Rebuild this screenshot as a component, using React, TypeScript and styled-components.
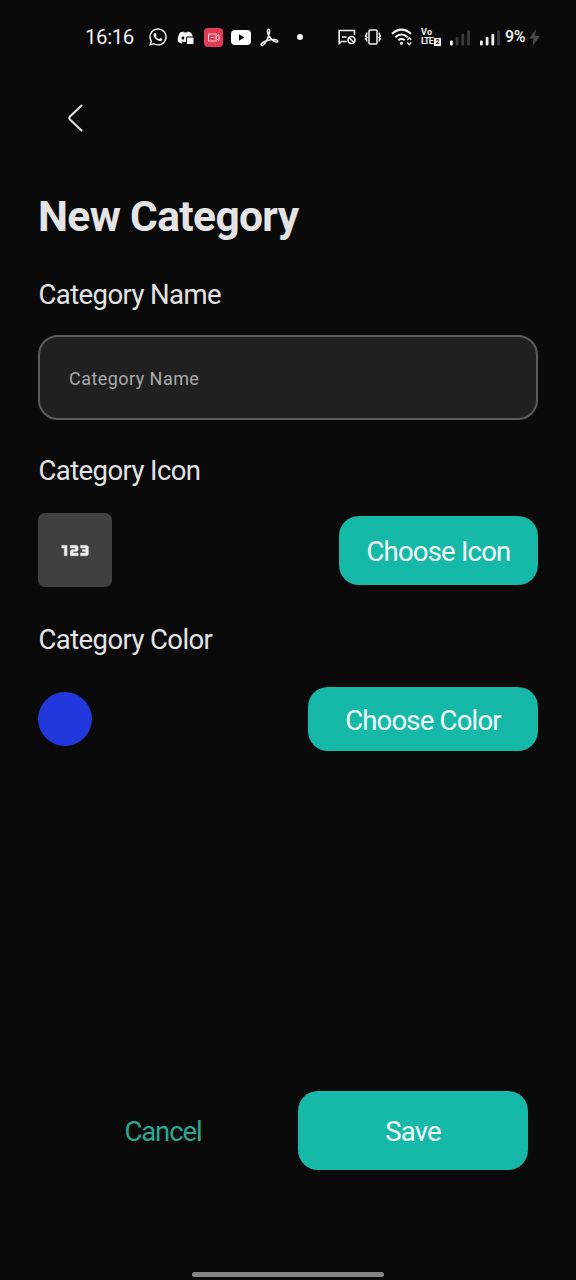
import React from "react";
import styled, { createGlobalStyle } from "styled-components";
import { FaDiscord, FaWhatsapp } from "react-icons/fa";
import { Md123 } from "react-icons/md";

const Global = createGlobalStyle`
  * { box-sizing: border-box; }
  body { margin: 0; background: #0a0a0a; }
  button, input { font: inherit; border: 0; padding: 0; margin: 0; background: none; outline: none; }
`;

const Screen = styled.main`
  width: 576px;
  height: 1280px;
  display: flex;
  flex-direction: column;
  overflow: hidden;
  background: #0a0a0a;
  color: #e4e4e4;
  font-family: Roboto, "Liberation Sans", sans-serif;
`;

const StatusBar = styled.header`
  height: 74px;
  padding-left: 85px;
  display: flex;
  align-items: center;
  color: #f4f4f4;
  flex: none;
`;

const Slot = styled.span<{ $w: number; $gap: number }>`
  width: ${(p) => p.$w}px;
  margin-left: ${(p) => p.$gap}px;
  display: flex;
  flex: none;
  align-items: center;
  svg { display: block; flex: none; overflow: visible; }
`;

const Clock = styled.time`
  width: 49px;
  font-size: 20.5px;
  line-height: 24px;
  letter-spacing: -0.45px;
  white-space: nowrap;
`;

const Battery = styled.span`
  font-size: 16px;
  font-weight: 500;
  line-height: 20px;
  letter-spacing: -0.4px;
  white-space: nowrap;
`;

const Volte = styled.span`
  display: grid;
  grid-template-columns: 13px 7px;
  grid-template-rows: 9px 9px;
  align-items: center;
  font-size: 9px;
  line-height: 9px;
  font-weight: 700;
  letter-spacing: -0.9px;
`;

const VolteTop = styled.span`
  grid-column: 1 / 3;
  letter-spacing: 0.3px;
`;

const VolteBottom = styled.span`
  width: 13px;
  overflow: hidden;
  white-space: nowrap;
`;

const SimBadge = styled.span`
  height: 8px;
  line-height: 8px;
  background: #f4f4f4;
  color: #0a0a0a;
  font-size: 7px;
  letter-spacing: 0;
  text-align: center;
`;

const Dot = styled.i`
  width: 6px;
  height: 6px;
  border-radius: 50%;
  background: #f4f4f4;
`;

const BackButton = styled.button`
  width: 36px;
  height: 36px;
  margin: 26px 0 0 57px;
  color: #e4e4e4;
  flex: none;
  svg { display: block; }
`;

const Form = styled.form`
  flex: 1;
  display: flex;
  flex-direction: column;
  padding: 56px 38px 0;
`;

const Title = styled.h1`
  margin: 0;
  height: 50px;
  font-size: 42.5px;
  line-height: 50px;
  font-weight: 700;
  white-space: nowrap;
  letter-spacing: -0.65px;
`;

const Label = styled.label<{ $top: number }>`
  margin-top: ${(p) => p.$top}px;
  height: 34px;
  padding-left: 0.5px;
  font-size: 27.5px;
  line-height: 34px;
  letter-spacing: -0.6px;
  white-space: nowrap;
`;

const NameField = styled.input`
  width: 500px;
  height: 85px;
  margin-top: 23px;
  padding: 2px 29px 0;
  flex: none;
  border: 2px solid #5c5c5c;
  border-radius: 20px;
  background: #202020;
  color: #e4e4e4;
  font-size: 18px;
  letter-spacing: 0.45px;
  &::placeholder { color: #aaa; opacity: 1; }
`;

const PickRow = styled.div<{ $top: number; $h: number }>`
  display: flex;
  align-items: center;
  justify-content: space-between;
  flex: none;
  width: 500px;
  margin-top: ${(p) => p.$top}px;
  height: ${(p) => p.$h}px;
`;

const IconTile = styled.div`
  width: 74px;
  height: 74px;
  border-radius: 7px;
  background: #404040;
  color: #eee;
  display: grid;
  place-items: center;
  path { stroke: #eee; stroke-width: 0.35; }
  path[fill="none"] { stroke: none; }
`;

const Swatch = styled.div`
  width: 54px;
  height: 54px;
  border-radius: 50%;
  background: #2238dc;
`;

const Filled = styled.button<{ $w: number; $h: number }>`
  width: ${(p) => p.$w}px;
  height: ${(p) => p.$h}px;
  padding-top: 3px;
  border-radius: 20px;
  background: #16b8a8;
  color: #f2fffd;
  font-size: 27.5px;
  line-height: 34px;
  letter-spacing: -0.8px;
  white-space: nowrap;
`;

const Plain = styled.button`
  width: 250px;
  height: 79px;
  padding-top: 3px;
  color: #2aa793;
  font-size: 27.5px;
  line-height: 34px;
  letter-spacing: -1.1px;
`;

const Actions = styled.footer`
  display: flex;
  align-items: center;
  gap: 10px;
  height: 79px;
  margin: 0 48px 102px 38px;
  flex: none;
`;

const HomeBar = styled.div`
  width: 192px;
  height: 5px;
  margin: 0 0 3px 192px;
  border-radius: 3px;
  background: #858585;
  flex: none;
`;

const Signal = ({ level }: { level: number }) => (
  <svg width="21" height="18" viewBox="0 0 21 18">
    {[0, 1, 2, 3].map((i) => (
      <rect
        key={i}
        x={i * 5.7}
        y={12.5 - i * 3.4}
        width="2.8"
        height={5 + i * 3.4}
        rx="1"
        fill={i < level ? "#f4f4f4" : "#3a3a3a"}
      />
    ))}
  </svg>
);

export default function App() {
  return (
    <Screen>
      <Global />
      <StatusBar>
        <Clock>16:16</Clock>
        <Slot $w={19} $gap={14}><FaWhatsapp size={20} /></Slot>
        <Slot $w={18} $gap={10}>
          <svg width="18" height="18" viewBox="0 0 18 18">
            <FaDiscord size={17} y={1} />
            <rect x="9.5" y="9" width="7.5" height="7.5" rx="1" fill="#f4f4f4" stroke="#0a0a0a" strokeWidth="1" />
          </svg>
        </Slot>
        <Slot $w={19} $gap={9}>
          <svg width="19" height="19" viewBox="0 0 19 19" fill="none">
            <rect width="19" height="19" rx="4" fill="#e23b55" />
            <rect x="4.5" y="6" width="7.5" height="7" stroke="#ffc9d0" />
            <path d="M12 9l3-2.5v6L12 10.5M7 9.5h2.5" stroke="#ffc9d0" />
          </svg>
        </Slot>
        <Slot $w={20} $gap={8}>
          <svg width="20" height="15" viewBox="0 0 20 15">
            <rect width="20" height="15" rx="4" fill="#fff" />
            <path d="M8 4.2v6.6l5.5-3.3z" fill="#0a0a0a" />
          </svg>
        </Slot>
        <Slot $w={19} $gap={9}>
          <svg width="19" height="19" viewBox="0 0 19 19" fill="none" stroke="#f4f4f4" strokeWidth="1.5" strokeLinecap="round" strokeLinejoin="round">
            <path d="M8 1.5c1.7-1.1 2 1.5 1.2 4.3C8 10.2 5.2 15.5 3 17.2c-1.5 1-2.6-.5-1.3-1.8C4 13.2 10 11.3 14.5 11.5c3.8.1 4.1 2.5 2 2.5-3.5 0-8-5.3-8.9-9.5-.3-1.5-.1-2.6.4-3z" />
          </svg>
        </Slot>
        <Slot $w={6} $gap={18}><Dot /></Slot>
        <Slot $w={19} $gap={35}>
          <svg width="19" height="16" viewBox="0 0 19 16" fill="none" stroke="#f4f4f4" strokeWidth="1.6">
            <path d="M16.5 6V1.5H1.2V14.5L3.5 12.5H8.5M4 8h4.5" />
            <circle cx="13.5" cy="11" r="3.5" />
            <path d="M11 8.5l5 5" />
          </svg>
        </Slot>
        <Slot $w={18} $gap={7}>
          <svg width="18" height="16" viewBox="0 0 18 16" fill="none" stroke="#f4f4f4" strokeWidth="1.5">
            <rect x="5" y="1" width="8" height="14" rx="1" />
            <path d="M2.7 3.5v2L1.5 7l1.5 1.5-1.5 1.5 1.2 1v1.5M15.3 3.5v2l1.2 1.5L15 8.5l1.5 1.5-1.2 1v1.5" />
          </svg>
        </Slot>
        <Slot $w={23} $gap={9}>
          <svg width="23" height="18" viewBox="0 0 23 18" fill="none" stroke="#f4f4f4" strokeWidth="2">
            <path d="M1 5.8Q10.5-2.5 20 5.8M4.3 9.2Q10.5 3.8 16.7 9.2M7.3 12.3Q10.5 9.8 13.7 12.3" />
            <circle cx="10.5" cy="15.3" r="1.5" fill="#f4f4f4" stroke="none" />
            <path d="M16.3 12l2-2.2 2 2.2M16.3 14.5l2 2.2 2-2.2" strokeWidth="1.3" />
          </svg>
        </Slot>
        <Slot $w={20} $gap={7}>
          <Volte>
            <VolteTop>Vo</VolteTop>
            <VolteBottom>LTE</VolteBottom>
            <SimBadge>2</SimBadge>
          </Volte>
        </Slot>
        <Slot $w={20} $gap={9}><Signal level={1} /></Slot>
        <Slot $w={20} $gap={10}><Signal level={3} /></Slot>
        <Slot $w={22} $gap={5}><Battery>9%</Battery></Slot>
        <Slot $w={11} $gap={2}>
          <svg width="11" height="17" viewBox="0 0 11 17"><path d="M7 0L0 9.5h4.5L3.5 17 11 7H6z" fill="#484848" /></svg>
        </Slot>
      </StatusBar>

      <BackButton type="button" aria-label="Back">
        <svg width="36" height="36" viewBox="0 0 36 36" fill="none" stroke="currentColor" strokeWidth="2" strokeLinecap="round">
          <path d="M24.5 5.5L13 16.5Q11.5 18 13 19.5L24.5 30.5" />
        </svg>
      </BackButton>

      <Form>
        <Title>New Category</Title>
        <Label $top={36}>Category Name</Label>
        <NameField placeholder="Category Name" />
        <Label $top={34}>Category Icon</Label>
        <PickRow $top={25} $h={74}>
          <IconTile><Md123 size={41} /></IconTile>
          <Filled type="button" $w={199} $h={69}>Choose Icon</Filled>
        </PickRow>
        <Label $top={36}>Category Color</Label>
        <PickRow $top={30} $h={64}>
          <Swatch />
          <Filled type="button" $w={230} $h={64}>Choose Color</Filled>
        </PickRow>
      </Form>

      <Actions>
        <Plain type="button">Cancel</Plain>
        <Filled type="button" $w={230} $h={79}>Save</Filled>
      </Actions>
      <HomeBar />
    </Screen>
  );
}
